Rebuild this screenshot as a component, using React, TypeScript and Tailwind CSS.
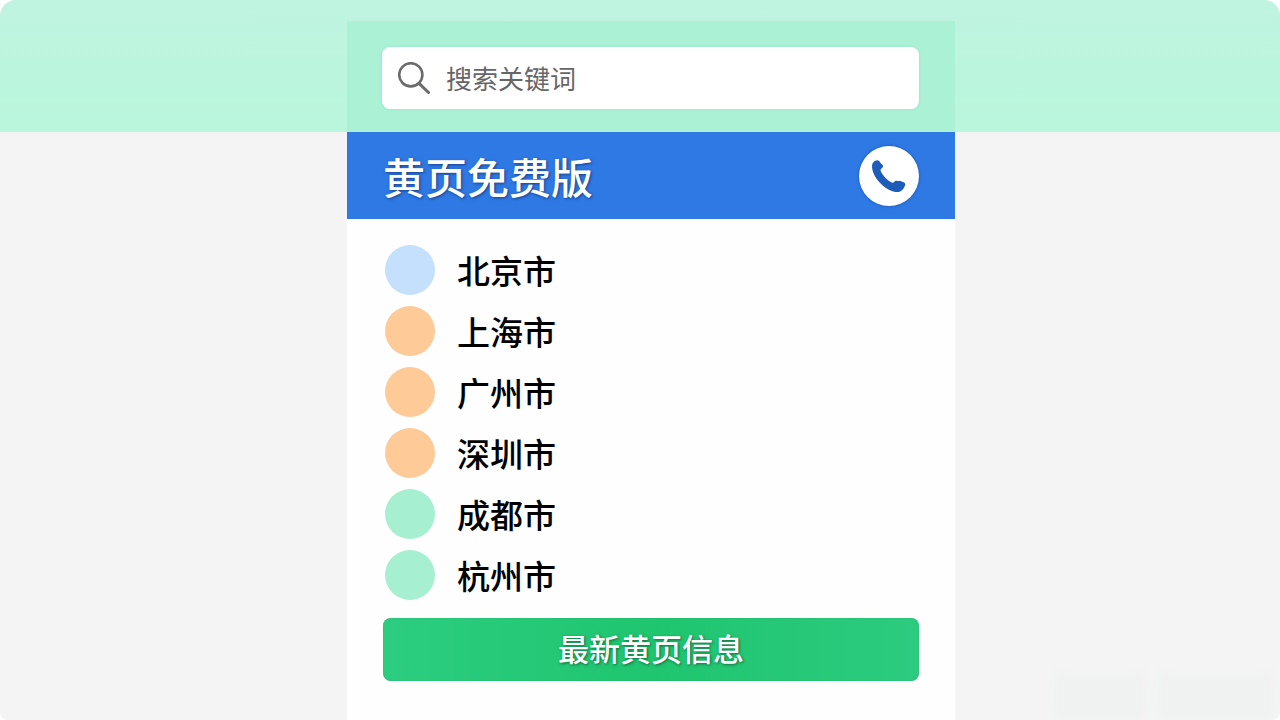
interface CityProps {
  name: string;
  color: string;
}

const CITIES: CityProps[] = [
  { name: '北京市', color: 'bg-[#c4e0fd]' },
  { name: '上海市', color: 'bg-[#fdca98]' },
  { name: '广州市', color: 'bg-[#fdca98]' },
  { name: '深圳市', color: 'bg-[#fdca98]' },
  { name: '成都市', color: 'bg-[#a6efd1]' },
  { name: '杭州市', color: 'bg-[#a6efd1]' },
]

const SearchBar = () => (
  <label className="flex h-[62px] items-center gap-4 rounded-lg bg-white px-4 shadow-[0_0_3px_rgba(80,160,130,0.2)]">
    <svg viewBox="0 0 32 32" className="size-8 shrink-0" fill="none" stroke="#6b6b6b" strokeLinecap="round" aria-hidden="true">
      <circle cx="12.8" cy="12.8" r="11.6" strokeWidth="2.6" />
      <path d="M21.3 21.6 L30.5 30.5" strokeWidth="3" />
    </svg>
    <input
      type="search"
      aria-label="搜索关键词"
      placeholder="搜索关键词"
      className="w-full min-w-0 bg-transparent text-[26px] leading-9 text-[#666] outline-none placeholder:text-[#666]"
    />
  </label>
)

const PhoneButton = () => (
  <button type="button" aria-label="电话" className="flex size-[60px] items-center justify-center rounded-full bg-white shadow-[0_0_3px_rgba(10,50,120,0.6)]">
    <svg viewBox="0 0 36 36" className="size-9" aria-hidden="true">
      <path
        d="M2.6 4 C4.2 2.4 6.6 1.4 8.2 3 C9.6 4.4 9.4 5.4 10.6 6 C12.6 7.2 12.6 8.6 11 9.9 C9.6 11.1 9.2 12 9.9 13.6 C11.6 17.4 15 21.2 19.6 24 C21.2 24.9 22.3 25.1 23.1 24 C24 22.7 25 22.4 26.6 22.9 C28 23.3 29 22.8 30.8 23.4 C33.6 24.2 34.8 25.4 34.2 27 C33 30.6 30.6 33.6 27.4 34 C21.8 34.4 15.6 31.2 10.4 26.2 C5 20.8 1.6 15.2 1.1 9.4 C0.9 7 1.3 5.2 2.6 4 Z"
        fill="#1d5cb9"
      />
    </svg>
  </button>
)

const City = ({ name, color }: CityProps) => (
  <li>
    <a href="#" className="flex h-[50px] items-center gap-[22px]">
      <span className={`size-[50px] rounded-full ${color}`} />
      <span className="text-[33px] leading-[48px] font-medium text-black">{name}</span>
    </a>
  </li>
)

// soft mark in the bottom right corner
const CornerMark = () => (
  <div className="pointer-events-none absolute right-2 bottom-0 flex h-11 w-[216px] gap-4" aria-hidden="true">
    <div className="w-[88px] bg-[#f0f1f1] blur-[5px]" />
    <div className="flex-1 bg-[#f0f1f1] blur-[5px]" />
  </div>
)

const App = () => {
  return (
    <div className="bg-white font-['Noto_Sans_CJK_SC',sans-serif]">
      <div className="relative flex min-h-screen flex-col overflow-hidden rounded-t-2xl rounded-b-lg bg-[#f4f4f4]">
        <header className="grid grid-cols-[347fr_608fr_325fr] bg-linear-to-b from-[#bff4e0] to-[#b9f6dc] pt-[21px]">
          <div className="col-start-2 bg-[#aaf1d6] pt-[26px] pr-9 pb-[23px] pl-[35px]">
            <SearchBar />
          </div>
        </header>

        <CornerMark />

        <div className="grid flex-1 grid-cols-[347fr_608fr_325fr]">
          <main className="col-start-2 bg-[#fefefe]">
            <div className="flex h-[87px] items-center justify-between bg-[#2f79e5] px-9">
              <h1 className="text-[42px] leading-[60px] font-medium text-white [text-shadow:1px_1px_3px_rgba(10,40,100,0.7)]">
                黄页免费版
              </h1>
              <PhoneButton />
            </div>

            <div className="px-9 py-[26px]">
              <ul className="flex flex-col gap-[11px] px-0.5">
                {CITIES.map(city => (
                  <City key={city.name} {...city} />
                ))}
              </ul>

              <button
                type="button"
                className="mt-[18px] h-[63px] w-full rounded-lg bg-linear-to-r from-[#2ccd80] via-[#1fc56f] to-[#2ccb7f] pb-1 text-[31px] leading-[56px] font-medium text-white shadow-[inset_0_0_1px_#278c5c] [text-shadow:1px_1px_3px_rgba(0,70,35,0.7)]"
              >
                最新黄页信息
              </button>
            </div>
          </main>
        </div>
      </div>
    </div>
  )
}

export default App
